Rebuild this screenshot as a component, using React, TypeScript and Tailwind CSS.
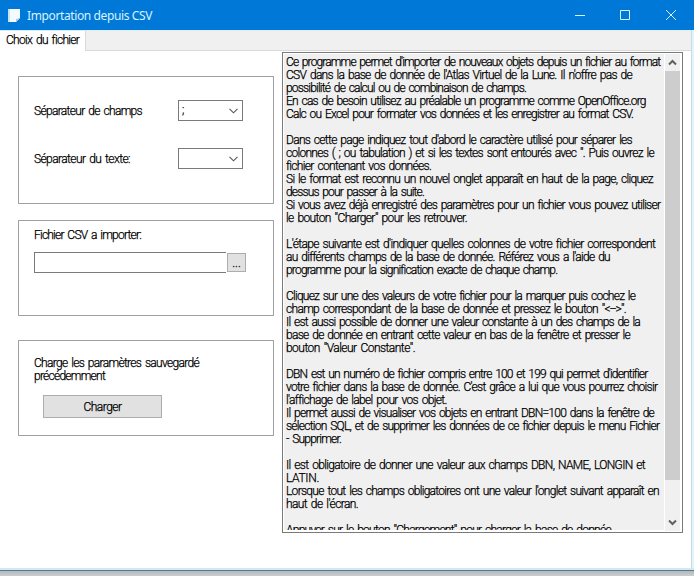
import { useLayoutEffect, useRef, useState } from "react";

const helpLines: [string, number][] = [
  ["Ce programme permet d'importer de nouveaux objets depuis un fichier au format", 374],
  ["CSV dans la base de donnée de l'Atlas Virtuel de la Lune. Il n'offre pas de", 346],
  ["possibilité de calcul ou de combinaison de champs.", 240],
  ["En cas de besoin utilisez au préalable un programme comme OpenOffice.org", 359],
  ["Calc ou Excel pour formater vos données et les enregistrer au format CSV.", 347],
  ["", 0],
  ["Dans cette page indiquez tout d'abord le caractère utilisé pour séparer les", 346],
  ["colonnes ( ; ou tabulation ) et si les textes sont entourés avec \". Puis ouvrez le", 368],
  ["fichier contenant vos données.", 145],
  ["Si le format est reconnu un nouvel onglet apparaît en haut de la page, cliquez", 367],
  ["dessus pour passer à la suite.", 138],
  ["Si vous avez déjà enregistré des paramètres pour un fichier vous pouvez utiliser", 374],
  ["le bouton \"Charger\" pour les retrouver.", 181],
  ["", 0],
  ["L'étape suivante est d'indiquer quelles colonnes de votre fichier correspondent", 369],
  ["au différents champs de la base de donnée. Référez vous a l'aide du", 324],
  ["programme pour la signification exacte de chaque champ.", 271],
  ["", 0],
  ["Cliquez sur une des valeurs de votre fichier pour la marquer puis cochez le", 349],
  ["champ correspondant de la base de donnée et pressez le bouton \"<-->\".", 340],
  ["Il est aussi possible de donner une valeur constante à un des champs de la", 354],
  ["base de donnée en entrant cette valeur en bas de la fenêtre et presser le", 344],
  ["bouton \"Valeur Constante\".", 129],
  ["", 0],
  ["DBN est un numéro de fichier compris entre 100 et 199 qui permet d'identifier", 361],
  ["votre fichier dans la base de donnée. C'est grâce a lui que vous pourrez choisir", 371],
  ["l'affichage de label pour vos objet.", 160],
  ["Il permet aussi de visualiser vos objets en entrant DBN=100 dans la fenêtre de", 368],
  ["sélection SQL, et de supprimer les données de ce fichier depuis le menu Fichier", 373],
  ["- Supprimer.", 55],
  ["", 0],
  ["Il est obligatoire de donner une valeur aux champs DBN, NAME, LONGIN et", 359],
  ["LATIN.", 33],
  ["Lorsque tout les champs obligatoires ont une valeur l'onglet suivant apparaît en", 373],
  ["haut de l'écran.", 72],
  ["", 0],
  ["Appuyer sur le bouton \"Chargement\" pour charger la base de donnée.", 327],
];

/* A single line of text whose tracking is adjusted to fill the given width. */
function Line({ text, width }: { text: string; width: number }) {
  const ref = useRef<HTMLSpanElement>(null);
  const [spacing, setSpacing] = useState(0);
  useLayoutEffect(() => {
    if (ref.current && text.length) {
      setSpacing((width - ref.current.getBoundingClientRect().width) / text.length);
    }
  }, [text, width]);
  return (
    <div className="h-[13px] whitespace-pre leading-[13px]">
      <span ref={ref} style={{ letterSpacing: spacing }}>{text}</span>
    </div>
  );
}

function Combo({ value }: { value: string }) {
  return (
    <div className="flex h-[21px] w-[65px] items-center justify-between border border-[#7a7a7a] bg-white pl-[3px] pr-1">
      <span className="leading-[13px]">{value}</span>
      <svg width="9" height="6" viewBox="0 0 9 6" fill="none" stroke="#555" strokeWidth="1.1">
        <path d="M.5.8 4.5 4.8 8.5.8" />
      </svg>
    </div>
  );
}

const panel = "w-64 border border-[#a0a0a0] pl-[15px]";

export default function App() {
  return (
    <div className="flex h-[576px] w-[694px] flex-col overflow-hidden bg-[#c6c8ca] font-['Roboto','Liberation_Sans',sans-serif] text-[12px] font-light text-black [word-spacing:1.5px]">
      <header className="flex h-[30px] shrink-0 items-center bg-[#0078d7] pl-[7px] text-[#d9f3ff]">
        <svg width="14" height="15" viewBox="0 0 14 15">
          <path d="M1 1h12v9l-4 4H1z" fill="#f4fbff" />
          <path d="M1 1h2v13H1z" fill="#c9e2ee" />
          <path d="M13 10 9 14v-3z" fill="#a9cde4" />
        </svg>
        <div className="ml-[6px] font-['Noto_Sans',sans-serif] font-normal [word-spacing:0px]">
          <Line text="Importation depuis CSV" width={125} />
        </div>
        <svg className="ml-auto mr-[17px]" width="103" height="12" viewBox="0 0 103 12" fill="none" stroke="#d9f3ff">
          <path d="M1 6.5h10M46.5 1.5h9v9h-9zM92 1l10 10M102 1 92 11" />
        </svg>
      </header>

      <div className="flex h-[538px] shrink-0 bg-white [-webkit-text-stroke:0.25px_black]">
        <div className="flex w-[692px] flex-col border-r border-[#c9dce2]">
          <div className="flex h-[21px] shrink-0">
            <div className="w-[85px] border-t border-[#d5edf8] pl-[6px] pt-[3px]">
              <Line text="Choix du fichier" width={73} />
            </div>
            <div className="grow border-b border-l border-t border-b-[#d9d9d9] border-l-[#d9d9d9] border-t-[#e2eef3] bg-[#f0f0f0]" />
          </div>

          <main className="flex grow">
            <div className="flex w-[282px] flex-col pl-[18px] pt-[25px]">
              <section className={`${panel} h-[128px] pt-[23px]`}>
                <div className="flex items-center">
                  <div className="w-[144px] pt-[2px]"><Line text="Séparateur de champs" width={108} /></div>
                  <Combo value=";" />
                </div>
                <div className="mt-[27px] flex items-center">
                  <div className="w-[144px] pt-[2px]"><Line text="Séparateur du texte:" width={96} /></div>
                  <Combo value="" />
                </div>
              </section>

              <section className={`${panel} mt-[16px] h-24 pt-2`}>
                <Line text="Fichier CSV a importer:" width={107} />
                <div className="mt-[10px] flex items-center">
                  <div className="h-[21px] w-[192px] border border-r-0 border-[#7a7a7a] bg-white" />
                  <button className="ml-px flex h-[19px] w-[19px] items-center justify-center border border-[#adadad] bg-[#e1e1e1] pt-[2px] leading-[13px]">...</button>
                </div>
              </section>

              <section className={`${panel} mt-6 h-24 pt-4`}>
                <Line text="Charge les paramètres sauvegardé" width={165} />
                <Line text="précédemment" width={71} />
                <button className="ml-[9px] mt-3 flex h-[23px] w-[119px] items-center justify-center border border-[#adadad] bg-[#e1e1e1] pt-px">
                  <Line text="Charger" width={38} />
                </button>
              </section>
            </div>

            <article className="mt-px flex h-[481px] w-[401px] border border-[#7a7a7a] bg-white p-px">
              <div className="h-[476px] w-[380px] overflow-hidden bg-[#f0f0f0] pl-[2px] pt-[2px]">
                {helpLines.map(([text, width], i) => (
                  <Line key={i} text={text} width={width} />
                ))}
              </div>
              <div className="ml-px flex w-[15px] flex-col items-center bg-[#f0f0f0]">
                <div className="flex h-[17px] shrink-0 items-center">
                  <svg width="9" height="7" viewBox="0 0 9 7" fill="none" stroke="#606060" strokeWidth="2">
                    <path d="M1 5.5 4.5 2 8 5.5" />
                  </svg>
                </div>
                <div className="h-[409px] w-[15px] shrink-0 bg-[#cdcdcd]" />
                <div className="mt-auto flex h-[17px] shrink-0 items-center">
                  <svg width="9" height="7" viewBox="0 0 9 7" fill="none" stroke="#606060" strokeWidth="2">
                    <path d="M1 1.5 4.5 5 8 1.5" />
                  </svg>
                </div>
              </div>
            </article>
          </main>
        </div>
        <div className="grow bg-[#dff5fb]" />
      </div>
      <div className="h-[2px] shrink-0 bg-[#d3e9f2]" />
      <div className="h-px shrink-0 bg-[#557a94]" />
      <div className="grow bg-linear-to-b from-[#b2bac0] to-[#cdcdcd]" />
    </div>
  );
}
